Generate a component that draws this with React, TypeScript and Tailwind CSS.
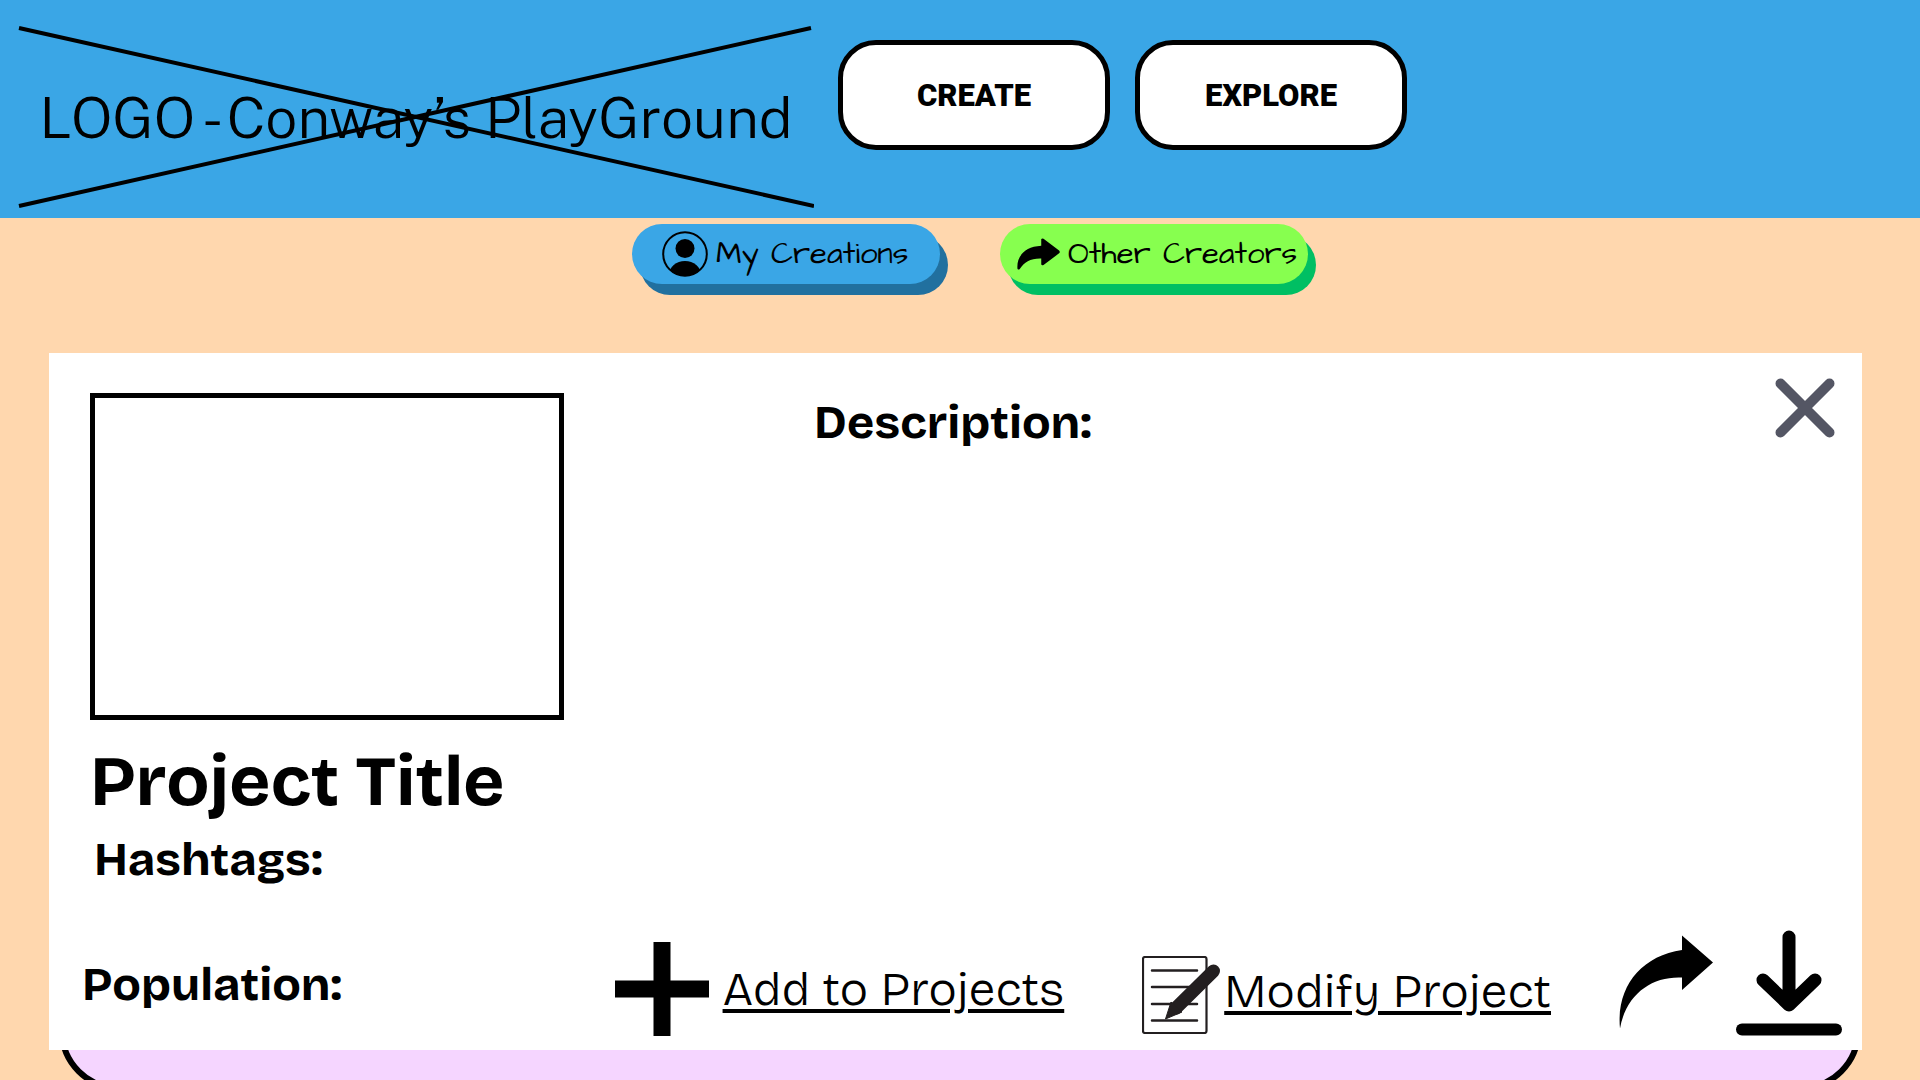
import type { ReactNode } from "react";

function ShareIcon({ className, rounded }: { className: string; rounded?: boolean }) {
  return (
    <svg viewBox="0 0 94 94" preserveAspectRatio="none" className={className} aria-hidden="true">
      {rounded ? (
        <path
          d="M53 3 Q55 0 58 2 L92 37 Q95 41 92 45 L58 79 Q55 82 53 78 V60 C30 59 16 70 6 91 Q3 95 1 90 C-1 60 12 26 53 23 Z"
          fill="black"
        />
      ) : (
        <path d="M63 0.500 L94 27.500 L63 55 V42.500 C33 41 7 59 1 93.500 C-3 52 22 21 63 15 Z" fill="black" />
      )}
    </svg>
  );
}

function PersonIcon() {
  return (
    <svg viewBox="0 0 46 46" className="size-[46px] shrink-0" aria-hidden="true">
      <clipPath id="person-clip">
        <circle cx="23" cy="23" r="22" />
      </clipPath>
      <circle cx="23" cy="23" r="21.800" fill="none" stroke="black" strokeWidth="2" />
      <circle cx="23" cy="17.500" r="9.500" />
      <ellipse cx="23" cy="44" rx="16" ry="14" clipPath="url(#person-clip)" />
    </svg>
  );
}

function PlusIcon() {
  return (
    <svg viewBox="0 0 94 94" className="size-[94px]" aria-hidden="true">
      <path d="M0 47 H94 M47 0 V94" stroke="black" strokeWidth="17" />
    </svg>
  );
}

function NoteIcon() {
  return (
    <svg viewBox="0 0 78 78" className="size-[78px]" fill="none" stroke="#231f20" aria-hidden="true">
      <rect x="1" y="1" width="63.500" height="76" rx="2" strokeWidth="2.200" />
      <path d="M10 14.500 H55 M10 31 H55 M10 48 H55 M10 64.500 H55" strokeWidth="2.500" strokeLinecap="round" />
      <path d="M71.500 15 L34 52" strokeWidth="13" strokeLinecap="round" />
      <path d="M29 46 L23.500 63 L40 56 Z" fill="#231f20" strokeWidth="1" strokeLinejoin="round" />
    </svg>
  );
}

function DownloadIcon() {
  return (
    <svg viewBox="0 0 106 106" className="size-[106px]" fill="none" stroke="black" strokeLinecap="round" strokeLinejoin="round" aria-hidden="true">
      <path d="M53 7 V75 M27 50 L53 75 L79 50" strokeWidth="13" />
      <path d="M6 99.500 H100" strokeWidth="12" />
    </svg>
  );
}

function CloseIcon() {
  return (
    <svg viewBox="0 0 60 60" className="size-[60px]" aria-hidden="true">
      <path d="M5.500 5.500 L54.500 54.500 M54.500 5.500 L5.500 54.500" stroke="#545664" strokeWidth="10" strokeLinecap="round" />
    </svg>
  );
}

function NavButton({ children }: { children: ReactNode }) {
  return (
    <button className="h-[110px] w-[272px] rounded-[38px] border-5 border-black bg-white pt-0.5 font-['Roboto',sans-serif] text-[31px] font-black">
      {children}
    </button>
  );
}

export default function App() {
  return (
    <div className="flex h-screen flex-col overflow-hidden bg-[#ffd7ae] font-['Bricolage_Grotesque','Inter',sans-serif] text-black">
      <header className="flex h-[218px] shrink-0 items-start gap-6 bg-[#3aa6e6] pl-[18px]">
        <div className="relative mt-[26px] flex h-[183px] w-[796px] items-center justify-center font-['Public_Sans','Noto_Sans',sans-serif] text-[57px] leading-none font-light whitespace-nowrap">
          <span>LOGO - Conway’s PlayGround</span>
          <svg viewBox="0 0 796 183" className="absolute inset-0 size-full" aria-hidden="true">
            <path d="M1 2 L796 180 M1 180 L793 2" stroke="black" strokeWidth="4" />
          </svg>
        </div>
        <nav className="mt-[40px] flex gap-[25px]">
          <NavButton>CREATE</NavButton>
          <NavButton>EXPLORE</NavButton>
        </nav>
      </header>

      <div className="mt-1.5 flex h-[60px] shrink-0 justify-center gap-[60px] pl-5 font-['Architects_Daughter','Comic_Neue','Inter',sans-serif] text-[31px] leading-none whitespace-nowrap">
        <button className="flex w-[308px] items-center gap-2 rounded-full bg-[#3aa6e6] pl-[30px] shadow-[8px_11px_0_#21709f]">
          <PersonIcon />
          My Creations
        </button>
        <button className="flex w-[308px] items-center gap-2 rounded-full bg-[#87ff4f] pl-[17px] shadow-[8px_11px_0_#00bf63]">
          <ShareIcon className="h-8 w-[43px] shrink-0" rounded />
          Other Creators
        </button>
      </div>

      <main className="relative z-10 mt-[69px] mr-[58px] mb-[30px] ml-[49px] flex flex-1 flex-col justify-between bg-white pt-[25px] pr-5 pb-3.5 pl-[33px]">
        <div className="flex items-start">
          <section className="mt-[15px] w-[732px] shrink-0 pl-2">
            <div className="h-[327px] w-[474px] border-5 border-black" />
            <h1 className="mt-5 text-[71px] leading-[84px] font-bold">Project Title</h1>
            <h2 className="mt-2 pl-1 text-[47px] leading-14 font-bold">Hashtags:</h2>
          </section>
          <section className="mt-[17px] flex-1">
            <h2 className="text-[47px] leading-14 font-bold">Description:</h2>
          </section>
          <button aria-label="Close" className="mr-[7px]">
            <CloseIcon />
          </button>
        </div>

        <footer className="flex items-end">
          <h2 className="flex-1 pb-[23px] text-[47px] leading-14 font-bold whitespace-nowrap">Population:</h2>
          <div className="flex items-end gap-[68px] text-5xl leading-14 font-light whitespace-nowrap">
            <a href="#add" className="flex items-center gap-3.5 pr-2.5">
              <PlusIcon />
              <span className="underline decoration-4 underline-offset-4">Add to Projects</span>
            </a>
            <a href="#modify" className="flex items-center gap-1 pb-0.5">
              <NoteIcon />
              <span className="pb-2 underline decoration-4 underline-offset-4">Modify Project</span>
            </a>
            <div className="flex items-start gap-[23px]">
              <button aria-label="Share" className="mt-[5px]">
                <ShareIcon className="size-[94px]" />
              </button>
              <button aria-label="Download">
                <DownloadIcon />
              </button>
            </div>
          </div>
        </footer>
      </main>

      <div className="mx-[59px] -mt-[150px] -mb-[11px] h-[161px] shrink-0 rounded-[60px] border-6 border-black bg-[#f5d5ff]" />
    </div>
  );
}
